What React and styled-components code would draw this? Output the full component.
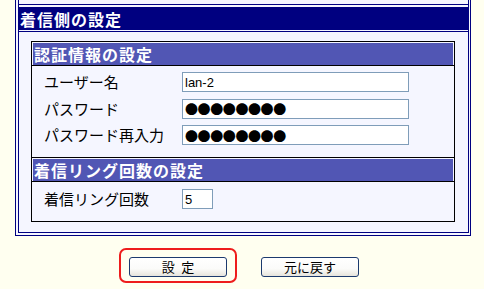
import React from 'react'
import styled, { createGlobalStyle } from 'styled-components'

const GlobalStyle = createGlobalStyle`
  html, body {
    margin: 0;
    padding: 0;
    background: #fffff0;
  }
  body {
    font-family: "Noto Sans CJK JP", "DejaVu Sans", sans-serif;
    color: #000;
  }
`

const Page = styled.div`
  width: 484px;
  height: 289px;
  overflow: hidden;
  padding-left: 15px;
  box-sizing: border-box;
`

const OuterFrame = styled.div`
  width: 456px;
  box-sizing: border-box;
  border: 1px solid #000080;
  border-top: none;
  padding: 0 1px 2px 2px;
  background: #f5f6ff;
`

const InnerFrame = styled.div`
  border: 1px solid #000080;
  border-top: none;
`

const PrevTail = styled.div`
  height: 4px;
  border-bottom: 1px solid #000080;
`

const GroupHeader = styled.div`
  margin-top: 2px;
  height: 23px;
  background: #000080;
  color: #fff;
  display: flex;
  align-items: center;
  padding-left: 1px;
  font-size: 16px;
  font-weight: bold;
  letter-spacing: 1px;
`

const Panel = styled.div`
  margin-top: 1px;
  border-top: 1px solid #000080;
  padding: 9px 13px 10px 12px;
`

const SettingsTable = styled.div`
  border: 1px solid #000;
`

const Section = styled.div`
  & + & {
    border-top: 1px solid #000;
  }
`

const HeadWrap = styled.div`
  padding: 1px 1px 0;
  border-bottom: 1px solid #000;
`

const SectionHead = styled.div`
  height: 22px;
  background: #5156b4;
  color: #fff;
  display: flex;
  align-items: center;
  padding-left: 1px;
  font-size: 16px;
  font-weight: bold;
  letter-spacing: 1px;
`

const Body = styled.div`
  display: grid;
  grid-template-columns: 138px auto;
  row-gap: 6.5px;
  align-items: center;
  padding: ${p => p.$top}px 0 12px 12px;
`

const Label = styled.div`
  font-size: 15px;
  line-height: 20px;
  white-space: nowrap;
`

const Field = styled.input`
  box-sizing: border-box;
  width: ${p => p.$w}px;
  height: 20px;
  margin: 0;
  border: 1px solid #7f9db9;
  background: #fff;
  padding: 0 2px;
  outline: none;
  color: #000;
  font-family: ${p => (p.$dots ? '"Noto Sans CJK JP", sans-serif' : '"Liberation Sans", Arial, sans-serif')};
  font-size: 13px;
  letter-spacing: ${p => (p.$dots ? '-0.4px' : '0')};
`

const ButtonBar = styled.div`
  display: flex;
  gap: 34px;
  padding-left: 114px;
  margin-top: 21px;
`

const Highlight = styled.div`
  position: relative;
  display: flex;
  &::after {
    content: '';
    position: absolute;
    top: -9px;
    bottom: -6px;
    left: -10px;
    right: -10px;
    border: 2px solid #ee1c1c;
    border-radius: 7px;
    pointer-events: none;
  }
`

const Button = styled.button`
  width: 98px;
  height: 20px;
  margin: 0;
  padding: 0;
  border: 1px solid #1c3a6e;
  border-radius: 3px;
  background: linear-gradient(#ffffff 0%, #fbfbf9 60%, #e6e4dc 100%);
  font-family: "Noto Sans CJK JP", sans-serif;
  font-size: 13px;
  line-height: 18px;
  color: #000;
`

const rows = [
  { label: 'ユーザー名', value: 'lan-2' },
  { label: 'パスワード', value: '●●●●●●●●', dots: true },
  { label: 'パスワード再入力', value: '●●●●●●●●', dots: true },
]

export default function App() {
  return (
    <Page>
      <GlobalStyle />
      <OuterFrame>
        <InnerFrame>
          <PrevTail />
          <GroupHeader>着信側の設定</GroupHeader>
          <Panel>
            <SettingsTable>
              <Section>
                <HeadWrap>
                  <SectionHead>認証情報の設定</SectionHead>
                </HeadWrap>
                <Body $top={6}>
                  {rows.map(r => (
                    <React.Fragment key={r.label}>
                      <Label>{r.label}</Label>
                      <Field $w={227} $dots={r.dots} value={r.value} readOnly />
                    </React.Fragment>
                  ))}
                </Body>
              </Section>
              <Section>
                <HeadWrap>
                  <SectionHead>着信リング回数の設定</SectionHead>
                </HeadWrap>
                <Body $top={7}>
                  <Label>着信リング回数</Label>
                  <Field $w={31} value="5" readOnly />
                </Body>
              </Section>
            </SettingsTable>
          </Panel>
        </InnerFrame>
      </OuterFrame>
      <ButtonBar>
        <Highlight>
          <Button>設{'\u2002'}定</Button>
        </Highlight>
        <Button>元に戻す</Button>
      </ButtonBar>
    </Page>
  )
}
